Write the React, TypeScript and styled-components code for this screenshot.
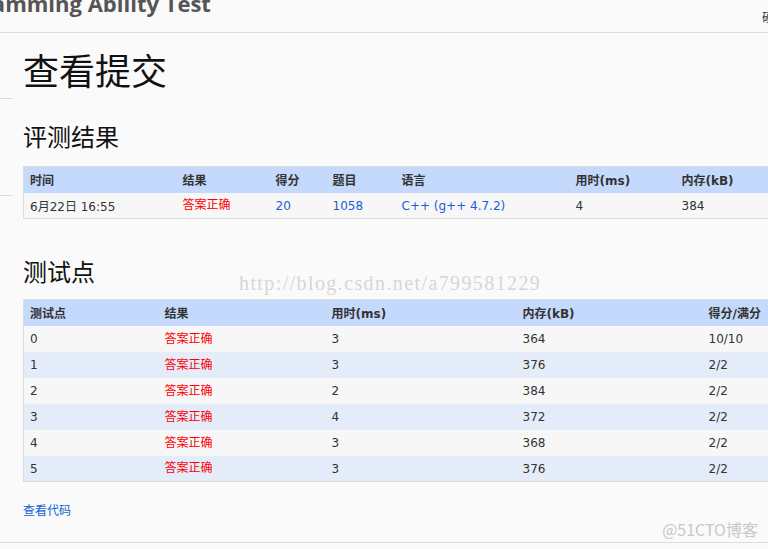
import React from 'react';
import styled, { createGlobalStyle } from 'styled-components';

const GlobalStyle = createGlobalStyle`
  html, body {
    margin: 0;
    padding: 0;
    background: #fafafa;
    overflow: hidden;
  }
  body {
    font-family: "DejaVu Sans", "Noto Sans CJK SC", sans-serif;
    font-size: 12px;
    color: #333;
  }
`;

const Page = styled.div`
  position: relative;
  width: 768px;
  height: 549px;
  overflow: hidden;
  background: #fafafa;
`;

const TopBar = styled.div`
  height: 32px;
  border-bottom: 1px solid #dcdcdc;
  display: flex;
  justify-content: space-between;
  align-items: flex-start;
  overflow: hidden;
`;

const Brand = styled.div`
  font-family: "Open Sans", sans-serif;
  font-weight: 700;
  font-size: 22px;
  line-height: 22px;
  color: #555;
  margin-top: -8px;
  margin-left: -68px;
  white-space: nowrap;
`;

const TopRight = styled.div`
  font-family: "Noto Sans CJK SC", sans-serif;
  font-size: 12px;
  color: #333;
  margin-top: 8px;
  margin-right: -6px;
  width: 12px;
  overflow: hidden;
  white-space: nowrap;
`;

const Body = styled.div`
  display: flex;
  border-bottom: 1px solid #dcdcdc;
  height: 509px;
`;

const Sidebar = styled.div`
  width: 13px;
  flex: none;
  padding-top: 65px;
`;

const SideItem = styled.div`
  height: 96px;
  border-top: 1px solid #dcdcdc;
`;

const Main = styled.div`
  padding-left: 10px;
  flex: 1;
  min-width: 0;
`;

const Title = styled.h1`
  font-family: "Noto Sans CJK SC", sans-serif;
  font-weight: 400;
  font-size: 36px;
  line-height: 40px;
  color: #111;
  margin: 16px 0 0;
`;

const Section = styled.h2<{ $top: number }>`
  font-family: "Noto Sans CJK SC", sans-serif;
  font-weight: 400;
  font-size: 24px;
  line-height: 28px;
  color: #111;
  margin: ${p => p.$top}px 0 0;
`;

const Table = styled.table<{ $top: number }>`
  border-collapse: collapse;
  table-layout: fixed;
  width: 820px;
  margin-top: ${p => p.$top}px;
  border: 1px solid #dcdcdc;
  border-right: none;
`;

const Th = styled.th<{ $w?: number }>`
  box-sizing: border-box;
  width: ${p => (p.$w ? `${p.$w}px` : 'auto')};
  background: #c4d9fb;
  text-align: left;
  font-family: "DejaVu Sans", "Noto Sans CJK SC", sans-serif;
  font-weight: 700;
  font-size: 12px;
  color: #333;
  height: 26px;
  padding: 0 6px;
  white-space: nowrap;
`;

const Row = styled.tr<{ $alt?: boolean }>`
  background: ${p => (p.$alt ? '#e4ecf9' : '#f7f7f7')};
`;

const Td = styled.td<{ $tone?: 'ok' | 'link' }>`
  box-sizing: border-box;
  height: 26px;
  padding: ${p => (p.$tone === 'ok' ? '0 6px 3px' : '1px 6px 0')};
  font-size: 12px;
  white-space: nowrap;
  font-family: ${p => (p.$tone === 'ok' ? '"Noto Sans CJK SC", sans-serif' : '"DejaVu Sans", "Noto Sans CJK SC", sans-serif')};
  color: ${p => (p.$tone === 'ok' ? '#ff0000' : p.$tone === 'link' ? '#1a5fd6' : '#333')};
`;

const CodeLink = styled.a`
  display: inline-block;
  margin-top: 19px;
  font-family: "Noto Sans CJK SC", sans-serif;
  font-size: 12px;
  color: #0a62d0;
  text-decoration: none;
`;

const Watermark = styled.div`
  position: absolute;
  left: 239px;
  top: 272px;
  font-family: "Liberation Serif", serif;
  font-size: 20px;
  letter-spacing: 1.4px;
  color: #d9d6d2;
  white-space: nowrap;
`;

const Stamp = styled.div`
  position: absolute;
  right: 10px;
  top: 517px;
  font-family: "Noto Sans CJK SC", sans-serif;
  font-size: 16px;
  color: #c8c8c8;
  white-space: nowrap;
`;

const points = [
  { id: 0, time: 3, mem: 364, score: '10/10' },
  { id: 1, time: 3, mem: 376, score: '2/2' },
  { id: 2, time: 2, mem: 384, score: '2/2' },
  { id: 3, time: 4, mem: 372, score: '2/2' },
  { id: 4, time: 3, mem: 368, score: '2/2' },
  { id: 5, time: 3, mem: 376, score: '2/2' },
];

export default function App() {
  return (
    <Page>
      <GlobalStyle />
      <TopBar>
        <Brand>Programming Ability Test</Brand>
        <TopRight>硬件</TopRight>
      </TopBar>
      <Body>
        <Sidebar>
          <SideItem />
          <SideItem />
        </Sidebar>
        <Main>
          <Title>查看提交</Title>
          <Section $top={33}>评测结果</Section>
          <Table $top={16}>
            <thead>
              <tr>
                <Th $w={153}>时间</Th>
                <Th $w={93}>结果</Th>
                <Th $w={57}>得分</Th>
                <Th $w={69}>题目</Th>
                <Th $w={174}>语言</Th>
                <Th $w={106}>用时(ms)</Th>
                <Th>内存(kB)</Th>
              </tr>
            </thead>
            <tbody>
              <Row>
                <Td>6月22日 16:55</Td>
                <Td $tone="ok">答案正确</Td>
                <Td $tone="link">20</Td>
                <Td $tone="link">1058</Td>
                <Td $tone="link">C++ (g++ 4.7.2)</Td>
                <Td>4</Td>
                <Td>384</Td>
              </Row>
            </tbody>
          </Table>
          <Section $top={38}>测试点</Section>
          <Table $top={14}>
            <thead>
              <tr>
                <Th $w={135}>测试点</Th>
                <Th $w={167}>结果</Th>
                <Th $w={191}>用时(ms)</Th>
                <Th $w={186}>内存(kB)</Th>
                <Th>得分/满分</Th>
              </tr>
            </thead>
            <tbody>
              {points.map(p => (
                <Row key={p.id} $alt={p.id % 2 === 1}>
                  <Td>{p.id}</Td>
                  <Td $tone="ok">答案正确</Td>
                  <Td>{p.time}</Td>
                  <Td>{p.mem}</Td>
                  <Td>{p.score}</Td>
                </Row>
              ))}
            </tbody>
          </Table>
          <CodeLink href="#">查看代码</CodeLink>
        </Main>
      </Body>
      <Watermark>http://blog.csdn.net/a799581229</Watermark>
      <Stamp>@51CTO博客</Stamp>
    </Page>
  );
}
